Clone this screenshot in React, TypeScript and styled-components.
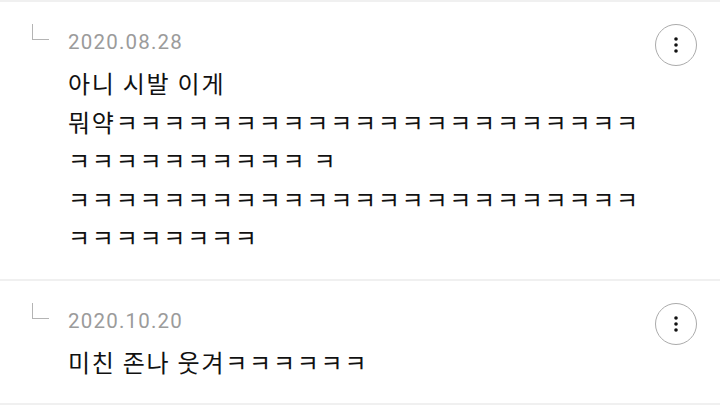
import React from 'react'
import styled, { createGlobalStyle } from 'styled-components'

const GlobalStyle = createGlobalStyle`
  html, body {
    margin: 0;
    padding: 0;
    background: #ffffff;
  }
  body {
    font-family: "Noto Sans CJK KR", "Noto Sans", sans-serif;
    -webkit-font-smoothing: antialiased;
  }
`

const List = styled.div`
  width: 720px;
  display: flex;
  flex-direction: column;
  border-bottom: 2px solid #f0f0f0;
`

const Reply = styled.div`
  display: flex;
  align-items: flex-start;
  border-top: 2px solid #f0f0f0;
  padding: 22px 23px 22px 32px;
`

// the little "└" that marks a reply
const ReplyMark = styled.span`
  flex: none;
  width: 16px;
  height: 15px;
  margin-right: 19px;
  border-left: 1.5px solid #b4b4b4;
  border-bottom: 1.5px solid #b4b4b4;
`

const Content = styled.div`
  flex: 1;
  min-width: 0;
  margin-top: 4px;
  display: flex;
  flex-direction: column;
  gap: 8px;
`

const Date = styled.div`
  font-family: Roboto, "Liberation Sans", sans-serif;
  font-size: 20.5px;
  line-height: 28px;
  letter-spacing: 1.2px;
  color: #9b9b9b;
`

const Body = styled.div`
  font-family: "Noto Sans CJK KR", "Noto Sans", sans-serif;
  font-size: 24px;
  line-height: 38.5px;
  letter-spacing: 1.75px;
  color: #111111;
`

const Line = styled.div`
  white-space: pre;
`

const MoreButton = styled.button`
  flex: none;
  width: 42px;
  height: 42px;
  padding: 0;
  border-radius: 50%;
  border: 1.3px solid #ababab;
  background: #ffffff;
  display: flex;
  align-items: center;
  justify-content: center;
  cursor: pointer;
`

function KebabIcon() {
  return (
    <svg width="6" height="18" viewBox="0 0 6 18">
      <circle cx="3" cy="3" r="1.8" fill="#111" />
      <circle cx="3" cy="9" r="1.8" fill="#111" />
      <circle cx="3" cy="15" r="1.8" fill="#111" />
    </svg>
  )
}

const k = (n: number) => 'ㅋ'.repeat(n)

const replies = [
  {
    date: '2020.08.28',
    lines: ['아니 시발 이게', '뭐약' + k(22), k(10) + ' ' + k(1), k(24), k(8)],
  },
  {
    date: '2020.10.20',
    lines: ['미친 존나 웃겨' + k(6)],
  },
]

export default function App() {
  return (
    <>
      <GlobalStyle />
      <List>
        {replies.map(r => (
          <Reply key={r.date}>
            <ReplyMark />
            <Content>
              <Date>{r.date}</Date>
              <Body>
                {r.lines.map((l, i) => (
                  <Line key={i}>{l}</Line>
                ))}
              </Body>
            </Content>
            <MoreButton aria-label="more">
              <KebabIcon />
            </MoreButton>
          </Reply>
        ))}
      </List>
    </>
  )
}
